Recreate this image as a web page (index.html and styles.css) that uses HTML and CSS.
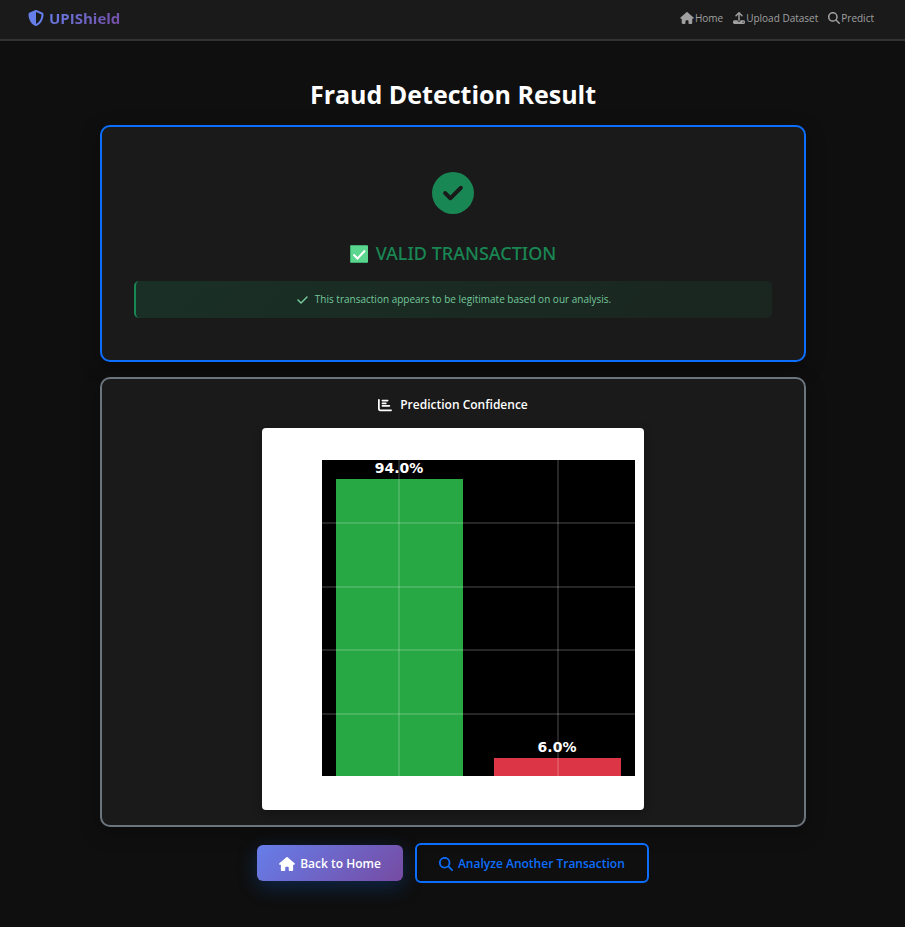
FILE: index.html
```html
<!DOCTYPE html>
<html lang="en">
<head>
<meta charset="utf-8">
<meta name="viewport" content="width=device-width, initial-scale=1">
<title>UPIShield - Fraud Detection Result</title>
<link rel="stylesheet" href="styles.css">
</head>
<body>
<svg class="sprite" aria-hidden="true">
  <symbol id="house" viewBox="0 0 576 512"><path d="M575.8 255.5c0 18-15 32.1-32 32.1h-32l.7 160.2c0 2.7-.2 5.4-.5 8.1V472c0 22.1-17.9 40-40 40H456c-1.1 0-2.2 0-3.3-.1c-1.4 .1-2.8 .1-4.2 .1H416 392c-22.1 0-40-17.9-40-40V448 384c0-17.7-14.3-32-32-32H256c-17.7 0-32 14.3-32 32v64 24c0 22.1-17.9 40-40 40H160 128.1c-1.5 0-3-.1-4.5-.2c-1.2 .1-2.4 .2-3.6 .2H104c-22.1 0-40-17.9-40-40V360c0-.9 0-1.9 .1-2.8V287.6H32c-18 0-32-14-32-32.1c0-9 3-17 10-24L266.4 8c7-7 15-8 22-8s15 2 21 7L564.8 231.5c8 7 12 15 11 24z"/></symbol>
  <symbol id="upload" viewBox="0 0 512 512"><path d="M288 109.3V352c0 17.7-14.3 32-32 32s-32-14.3-32-32V109.3l-73.4 73.4c-12.5 12.5-32.8 12.5-45.3 0s-12.5-32.8 0-45.3l128-128c12.5-12.5 32.8-12.5 45.3 0l128 128c12.5 12.5 12.5 32.8 0 45.3s-32.8 12.5-45.3 0L288 109.3zM64 352H192c0 35.3 28.7 64 64 64s64-28.7 64-64H448c35.3 0 64 28.7 64 64v32c0 35.3-28.7 64-64 64H64c-35.3 0-64-28.7-64-64V416c0-35.3 28.7-64 64-64zM432 456a24 24 0 1 0 0-48 24 24 0 1 0 0 48z"/></symbol>
  <symbol id="search" viewBox="0 0 512 512"><path d="M416 208c0 45.9-14.9 88.3-40 122.7L502.6 457.4c12.5 12.5 12.5 32.8 0 45.3s-32.8 12.5-45.3 0L330.7 376c-34.4 25.2-76.8 40-122.7 40C93.1 416 0 322.9 0 208S93.1 0 208 0S416 93.1 416 208zM208 352a144 144 0 1 0 0-288 144 144 0 1 0 0 288z"/></symbol>
  <symbol id="shield" viewBox="0 0 512 512"><path d="M256 0c4.6 0 9.2 1 13.4 2.9L457.7 82.8c22 9.3 38.4 31 38.3 57.2c-.5 99.2-41.3 280.7-213.6 363.2c-16.7 8-36.1 8-52.8 0C57.3 420.7 16.5 239.2 16 140c-.1-26.2 16.3-47.9 38.3-57.2L242.7 2.9C246.8 1 251.4 0 256 0zm0 66.8V444.8C394 378 431.1 230.1 432 141.4L256 66.8l0 0z"/></symbol>
  <symbol id="circle-check" viewBox="0 0 512 512"><path d="M256 512A256 256 0 1 0 256 0a256 256 0 1 0 0 512zM369 209L241 337c-9.4 9.4-24.6 9.4-33.9 0l-64-64c-9.4-9.4-9.4-24.6 0-33.9s24.6-9.4 33.9 0l47 47L335 175c9.4-9.4 24.6-9.4 33.9 0s9.4 24.6 0 33.9z"/></symbol>
  <symbol id="check" viewBox="0 0 448 512"><path d="M438.6 105.4c12.5 12.5 12.5 32.8 0 45.3l-256 256c-12.5 12.5-32.8 12.5-45.3 0l-128-128c-12.5-12.5-12.5-32.8 0-45.3s32.8-12.5 45.3 0L160 338.7 393.4 105.4c12.5-12.5 32.8-12.5 45.3 0z"/></symbol>
  <symbol id="chart" viewBox="0 0 512 512"><path d="M32 32c17.7 0 32 14.3 32 32V400c0 8.8 7.2 16 16 16H480c17.7 0 32 14.3 32 32s-14.3 32-32 32H80c-44.2 0-80-35.8-80-80V64C0 46.3 14.3 32 32 32zm96 64c0-17.7 14.3-32 32-32l192 0c17.7 0 32 14.3 32 32s-14.3 32-32 32H160c-17.7 0-32-14.3-32-32zm32 64H288c17.7 0 32 14.3 32 32s-14.3 32-32 32H160c-17.7 0-32-14.3-32-32s14.3-32 32-32zm0 96H416c17.7 0 32 14.3 32 32s-14.3 32-32 32H160c-17.7 0-32-14.3-32-32s14.3-32 32-32z"/></symbol>
</svg>

<header class="navbar">
  <a class="brand" href="#"><svg class="brand-icon" aria-hidden="true"><use href="#shield"/></svg><span class="brand-name">UPIShield</span></a>
  <nav class="nav-links">
    <a href="#"><svg class="icon-home" aria-hidden="true"><use href="#house"/></svg>Home</a>
    <a href="#"><svg aria-hidden="true"><use href="#upload"/></svg>Upload Dataset</a>
    <a href="#"><svg aria-hidden="true"><use href="#search"/></svg>Predict</a>
  </nav>
</header>

<main class="page">
  <h1>Fraud Detection Result</h1>

  <section class="card card-result">
    <svg class="status-icon" aria-hidden="true"><use href="#circle-check"/></svg>
    <h2>
      <svg class="tick-box" viewBox="0 0 18 18" aria-hidden="true">
        <rect class="tick-edge" width="18" height="18" rx="1"/>
        <rect class="tick-face" x="1" y="1" width="17" height="16"/>
        <path class="tick-mark" d="M3.500 9.500 7.500 13.500 15 5.500"/>
      </svg>
      VALID TRANSACTION
    </h2>
    <p class="alert" role="status"><svg aria-hidden="true"><use href="#check"/></svg>This transaction appears to be legitimate based on our analysis.</p>
  </section>

  <section class="card card-chart">
    <h3><svg aria-hidden="true"><use href="#chart"/></svg>Prediction Confidence</h3>
    <svg class="chart" viewBox="0 0 382 382" role="img" aria-label="Valid 94.0%, fraud 6.0%">
      <rect class="plot" x="60" y="32" width="313" height="316"/>
      <rect class="bar-valid" x="74" y="51" width="127" height="297"/>
      <rect class="bar-fraud" x="232" y="330" width="127" height="18"/>
      <path class="grid" d="M137 32V348M296 32V348M60 95H373M60 159H373M60 222H373M60 286H373"/>
      <text x="137" y="45">94.0%</text>
      <text x="295" y="324">6.0%</text>
    </svg>
  </section>

  <div class="actions">
    <a class="btn btn-primary" href="#"><svg class="icon-home" aria-hidden="true"><use href="#house"/></svg>Back to Home</a>
    <a class="btn btn-outline" href="#"><svg aria-hidden="true"><use href="#search"/></svg>Analyze Another Transaction</a>
  </div>
</main>
</body>
</html>
```
FILE: styles.css
```css
* {
  box-sizing: border-box;
}

body {
  margin: 0;
  min-height: 100vh;
  background: #0f0f0f;
  color: #fff;
  font-family: "Segoe UI", "Open Sans", "Noto Sans", sans-serif;
  font-size: 10px;
}

a {
  color: inherit;
  text-decoration: none;
}

svg {
  fill: currentColor;
  flex: none;
}

.sprite {
  display: none;
}

.navbar {
  display: flex;
  align-items: center;
  justify-content: space-between;
  height: 41px;
  padding: 0 31px 4px 28px;
  background: #1a1a1a;
  border-bottom: 2px solid #333;
}

.brand {
  display: flex;
  align-items: center;
  gap: 5px;
  font-size: 15px;
  font-weight: 700;
}

.brand-icon {
  width: 16px;
  height: 16px;
  color: #667eea;
}

.brand-name {
  background: linear-gradient(135deg, #667eea, #764ba2);
  background-clip: text;
  color: transparent;
}

.nav-links {
  display: flex;
  gap: 10px;
  color: #a0a0a0;
}

.nav-links a {
  display: flex;
  align-items: center;
  gap: 1px;
}

.nav-links svg {
  width: 12px;
  height: 12px;
}

.nav-links .icon-home {
  width: 14px;
}

.page {
  padding: 35px 99px 44px 100px;
}

h1,
h2,
h3,
p {
  margin: 0;
}

h1 {
  margin-bottom: 13px;
  font-size: 25px;
  font-weight: 700;
  line-height: 36px;
  text-align: center;
}

.card {
  display: flex;
  flex-direction: column;
  align-items: center;
  margin-bottom: 15px;
  background: #1a1a1a;
  border: 2px solid #6c757d;
  border-radius: 10px;
  box-shadow: 0 6px 20px rgba(0, 0, 0, 0.3);
}

.card-result {
  padding: 45px 32px 42px;
  border-color: #0d6efd;
}

.status-icon {
  width: 42px;
  height: 42px;
  color: #198754;
}

h2 {
  display: flex;
  align-items: center;
  gap: 8px;
  margin: 27px 0 15px;
  color: #198754;
  font-family: "Segoe UI", "Noto Sans", "Open Sans", sans-serif;
  font-size: 18px;
  font-weight: 500;
  line-height: 25px;
}

.tick-box {
  width: 18px;
  height: 18px;
}

.tick-edge {
  fill: #3fae70;
}

.tick-face {
  fill: #5bd68e;
}

.tick-mark {
  fill: none;
  stroke: #fff;
  stroke-width: 2;
}

.alert {
  display: flex;
  align-items: center;
  justify-content: center;
  gap: 7px;
  width: 100%;
  padding: 10px;
  background: linear-gradient(135deg, rgba(25, 135, 84, 0.2), rgba(25, 135, 84, 0.1));
  border-left: 2px solid #198754;
  border-radius: 5px;
  color: #75c79a;
  line-height: 17px;
}

.alert svg {
  width: 11px;
  height: 12px;
}

.card-chart {
  padding: 16px 16px 15px;
}

h3 {
  display: flex;
  align-items: center;
  gap: 8px;
  margin-bottom: 14px;
  font-size: 12px;
  font-weight: 600;
  line-height: 19px;
}

h3 svg {
  width: 14px;
  height: 14px;
}

.chart {
  width: 100%;
  max-width: 382px;
  background: #fff;
  border-radius: 4px;
  box-shadow: 0 3px 10px rgba(0, 0, 0, 0.3);
}

.bar-valid {
  fill: #28a745;
}

.bar-fraud {
  fill: #dc3545;
}

.grid {
  fill: none;
  stroke: #fff;
  stroke-opacity: 0.3;
}

.chart text {
  fill: #fff;
  font: 700 14px "DejaVu Sans", sans-serif;
  text-anchor: middle;
}

.plot {
  fill: #000;
}

.actions {
  display: flex;
  flex-wrap: wrap;
  align-items: center;
  justify-content: center;
  gap: 12px;
  padding-top: 1px;
}

.btn {
  display: flex;
  align-items: center;
  gap: 5px;
  padding: 9px 22px 7px;
  border-radius: 6px;
  font-size: 12px;
  font-weight: 600;
  line-height: 20px;
}

.btn svg {
  width: 14px;
  height: 14px;
}

.btn .icon-home {
  width: 16px;
}

.btn-primary {
  background: linear-gradient(135deg, #667eea, #764ba2);
  box-shadow: 0 6px 20px rgba(13, 110, 253, 0.25);
}

.btn-outline {
  border: 2px solid #0d6efd;
  color: #0d6efd;
}
```
